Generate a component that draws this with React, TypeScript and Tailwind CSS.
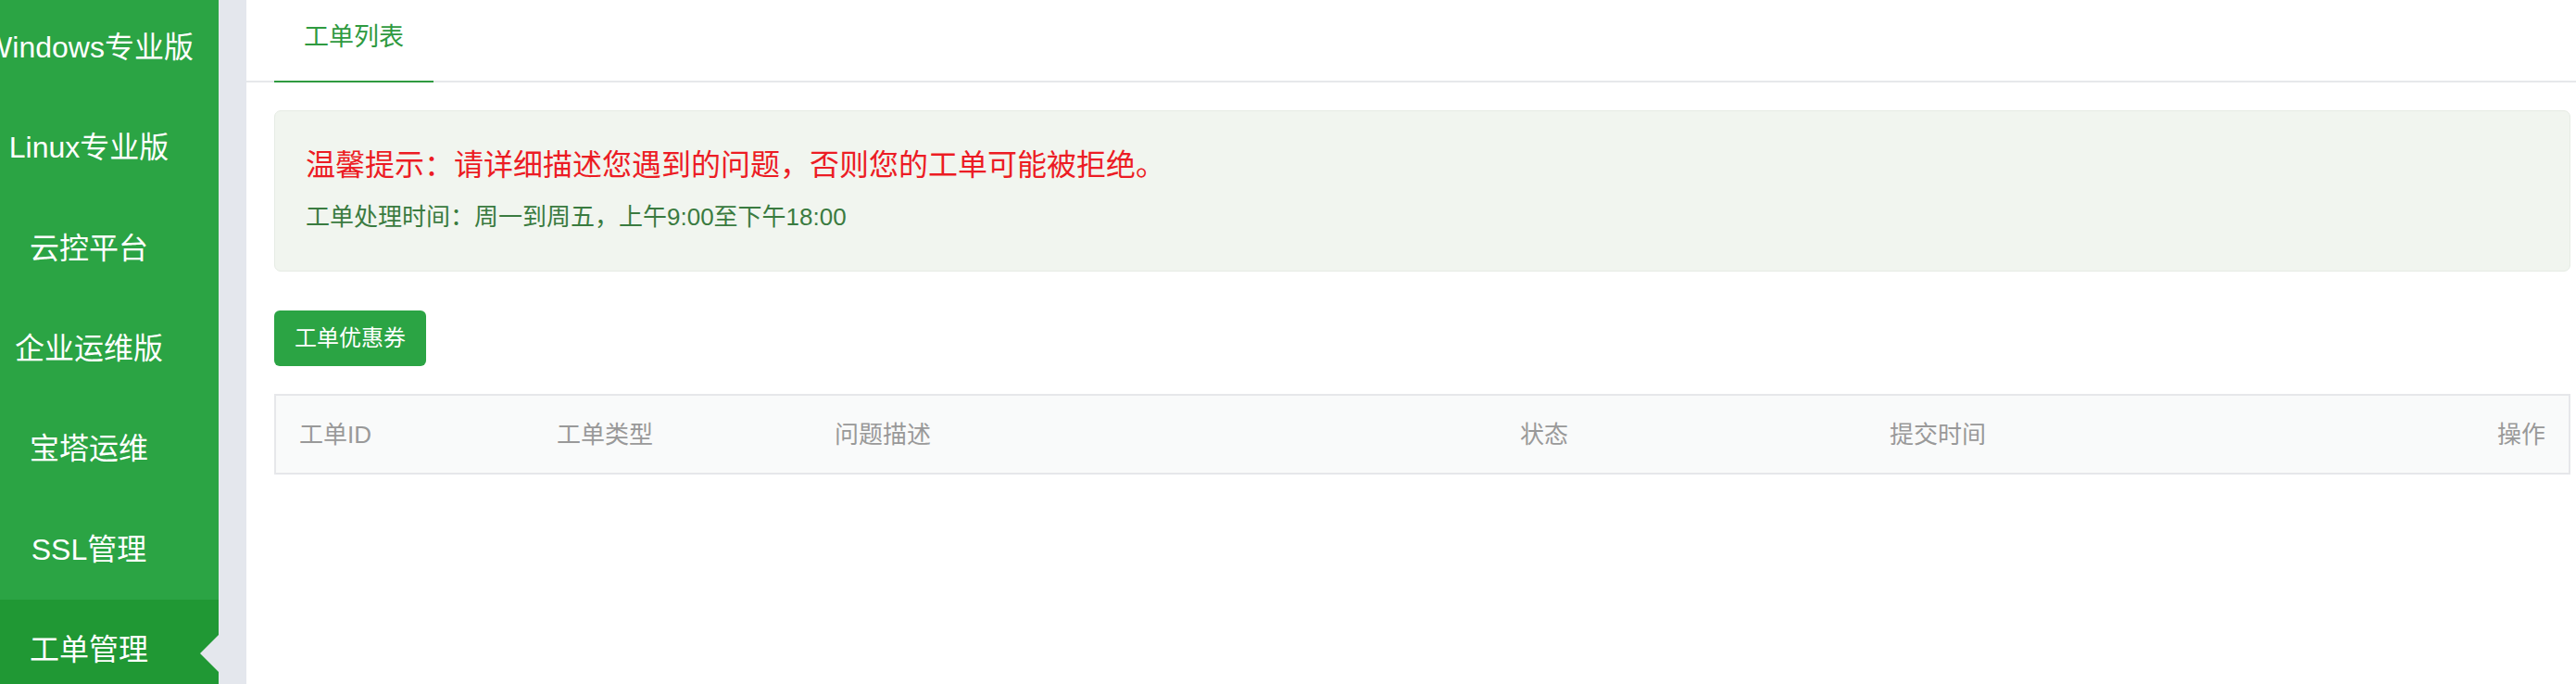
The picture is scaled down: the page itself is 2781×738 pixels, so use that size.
import React from "react";

const FONT = {
  fontFamily:
    '"Liberation Sans", "Noto Sans CJK SC", "Noto Sans", sans-serif',
};

const items = [
  "Windows专业版",
  "Linux专业版",
  "云控平台",
  "企业运维版",
  "宝塔运维",
  "SSL管理",
  "工单管理",
];

const columns = [
  { label: "工单ID", cls: "" },
  { label: "工单类型", cls: "" },
  { label: "问题描述", cls: "" },
  { label: "状态", cls: "" },
  { label: "提交时间", cls: "" },
  { label: "操作", cls: "text-right" },
];

export default function App() {
  return (
    <div
      className="flex w-[2781px] h-[738px] overflow-hidden bg-white"
      style={FONT}
    >
      {/* Sidebar */}
      <aside className="w-[236px] shrink-0 bg-[#2ba444] overflow-hidden">
        <div className="-mt-[3px]">
          {items.map((label, i) => {
            const active = i === items.length - 1;
            return (
              <div
                key={label}
                className={`relative h-[108.3px] flex items-center ${
                  active ? "bg-[#209834]" : ""
                }`}
              >
                <div className="w-[192px] flex justify-center whitespace-nowrap text-[32px] leading-[40px] text-white">
                  {label}
                </div>
                {active && (
                  <div className="absolute right-0 top-[38px] w-0 h-0 border-y-[20px] border-y-transparent border-r-[20px] border-r-[#e4e7ed]" />
                )}
              </div>
            );
          })}
        </div>
      </aside>

      {/* Gutter */}
      <div className="w-[30px] shrink-0 bg-[#e4e7ed]" />

      {/* Main */}
      <main className="flex-1 min-w-0 bg-white">
        {/* Tabs */}
        <div className="h-[89px] border-b-2 border-[#e6e8eb] flex">
          <div className="ml-[30px] w-[172px] h-[89px] border-b-2 border-[#2f9a40] flex justify-center pt-[22px]">
            <span className="text-[27px] leading-[36px] text-[#2f9a40]">
              工单列表
            </span>
          </div>
        </div>

        <div className="pl-[30px] pr-[6px]">
          {/* Alert */}
          <div className="mt-[30px] h-[174px] rounded-[7px] border border-[#e6ebe4] bg-[#f1f5ef] px-[33px] pt-[36px]">
            <div className="text-[32px] leading-[44px] text-[#ec1c24] whitespace-nowrap">
              温馨提示：请详细描述您遇到的问题，否则您的工单可能被拒绝。
            </div>
            <div className="mt-[16px] text-[26px] leading-[36px] text-[#3a7b40] whitespace-nowrap">
              工单处理时间：周一到周五，上午9:00至下午18:00
            </div>
          </div>

          {/* Button */}
          <button className="mt-[42px] w-[164px] h-[60px] rounded-[6px] bg-[#2ba444] text-white text-[24px] leading-[32px] flex items-center justify-center">
            工单优惠券
          </button>

          {/* Table header */}
          <div className="mt-[30px] h-[87px] border-2 border-[#e6e7ea] bg-[#f9fafa] grid grid-cols-[278px_300px_740px_399px_1fr_200px] items-center">
            {columns.map((c) => (
              <div
                key={c.label}
                className={`px-[25px] text-[26px] leading-[34px] text-[#999999] whitespace-nowrap ${c.cls}`}
              >
                {c.label}
              </div>
            ))}
          </div>
        </div>
      </main>
    </div>
  );
}
